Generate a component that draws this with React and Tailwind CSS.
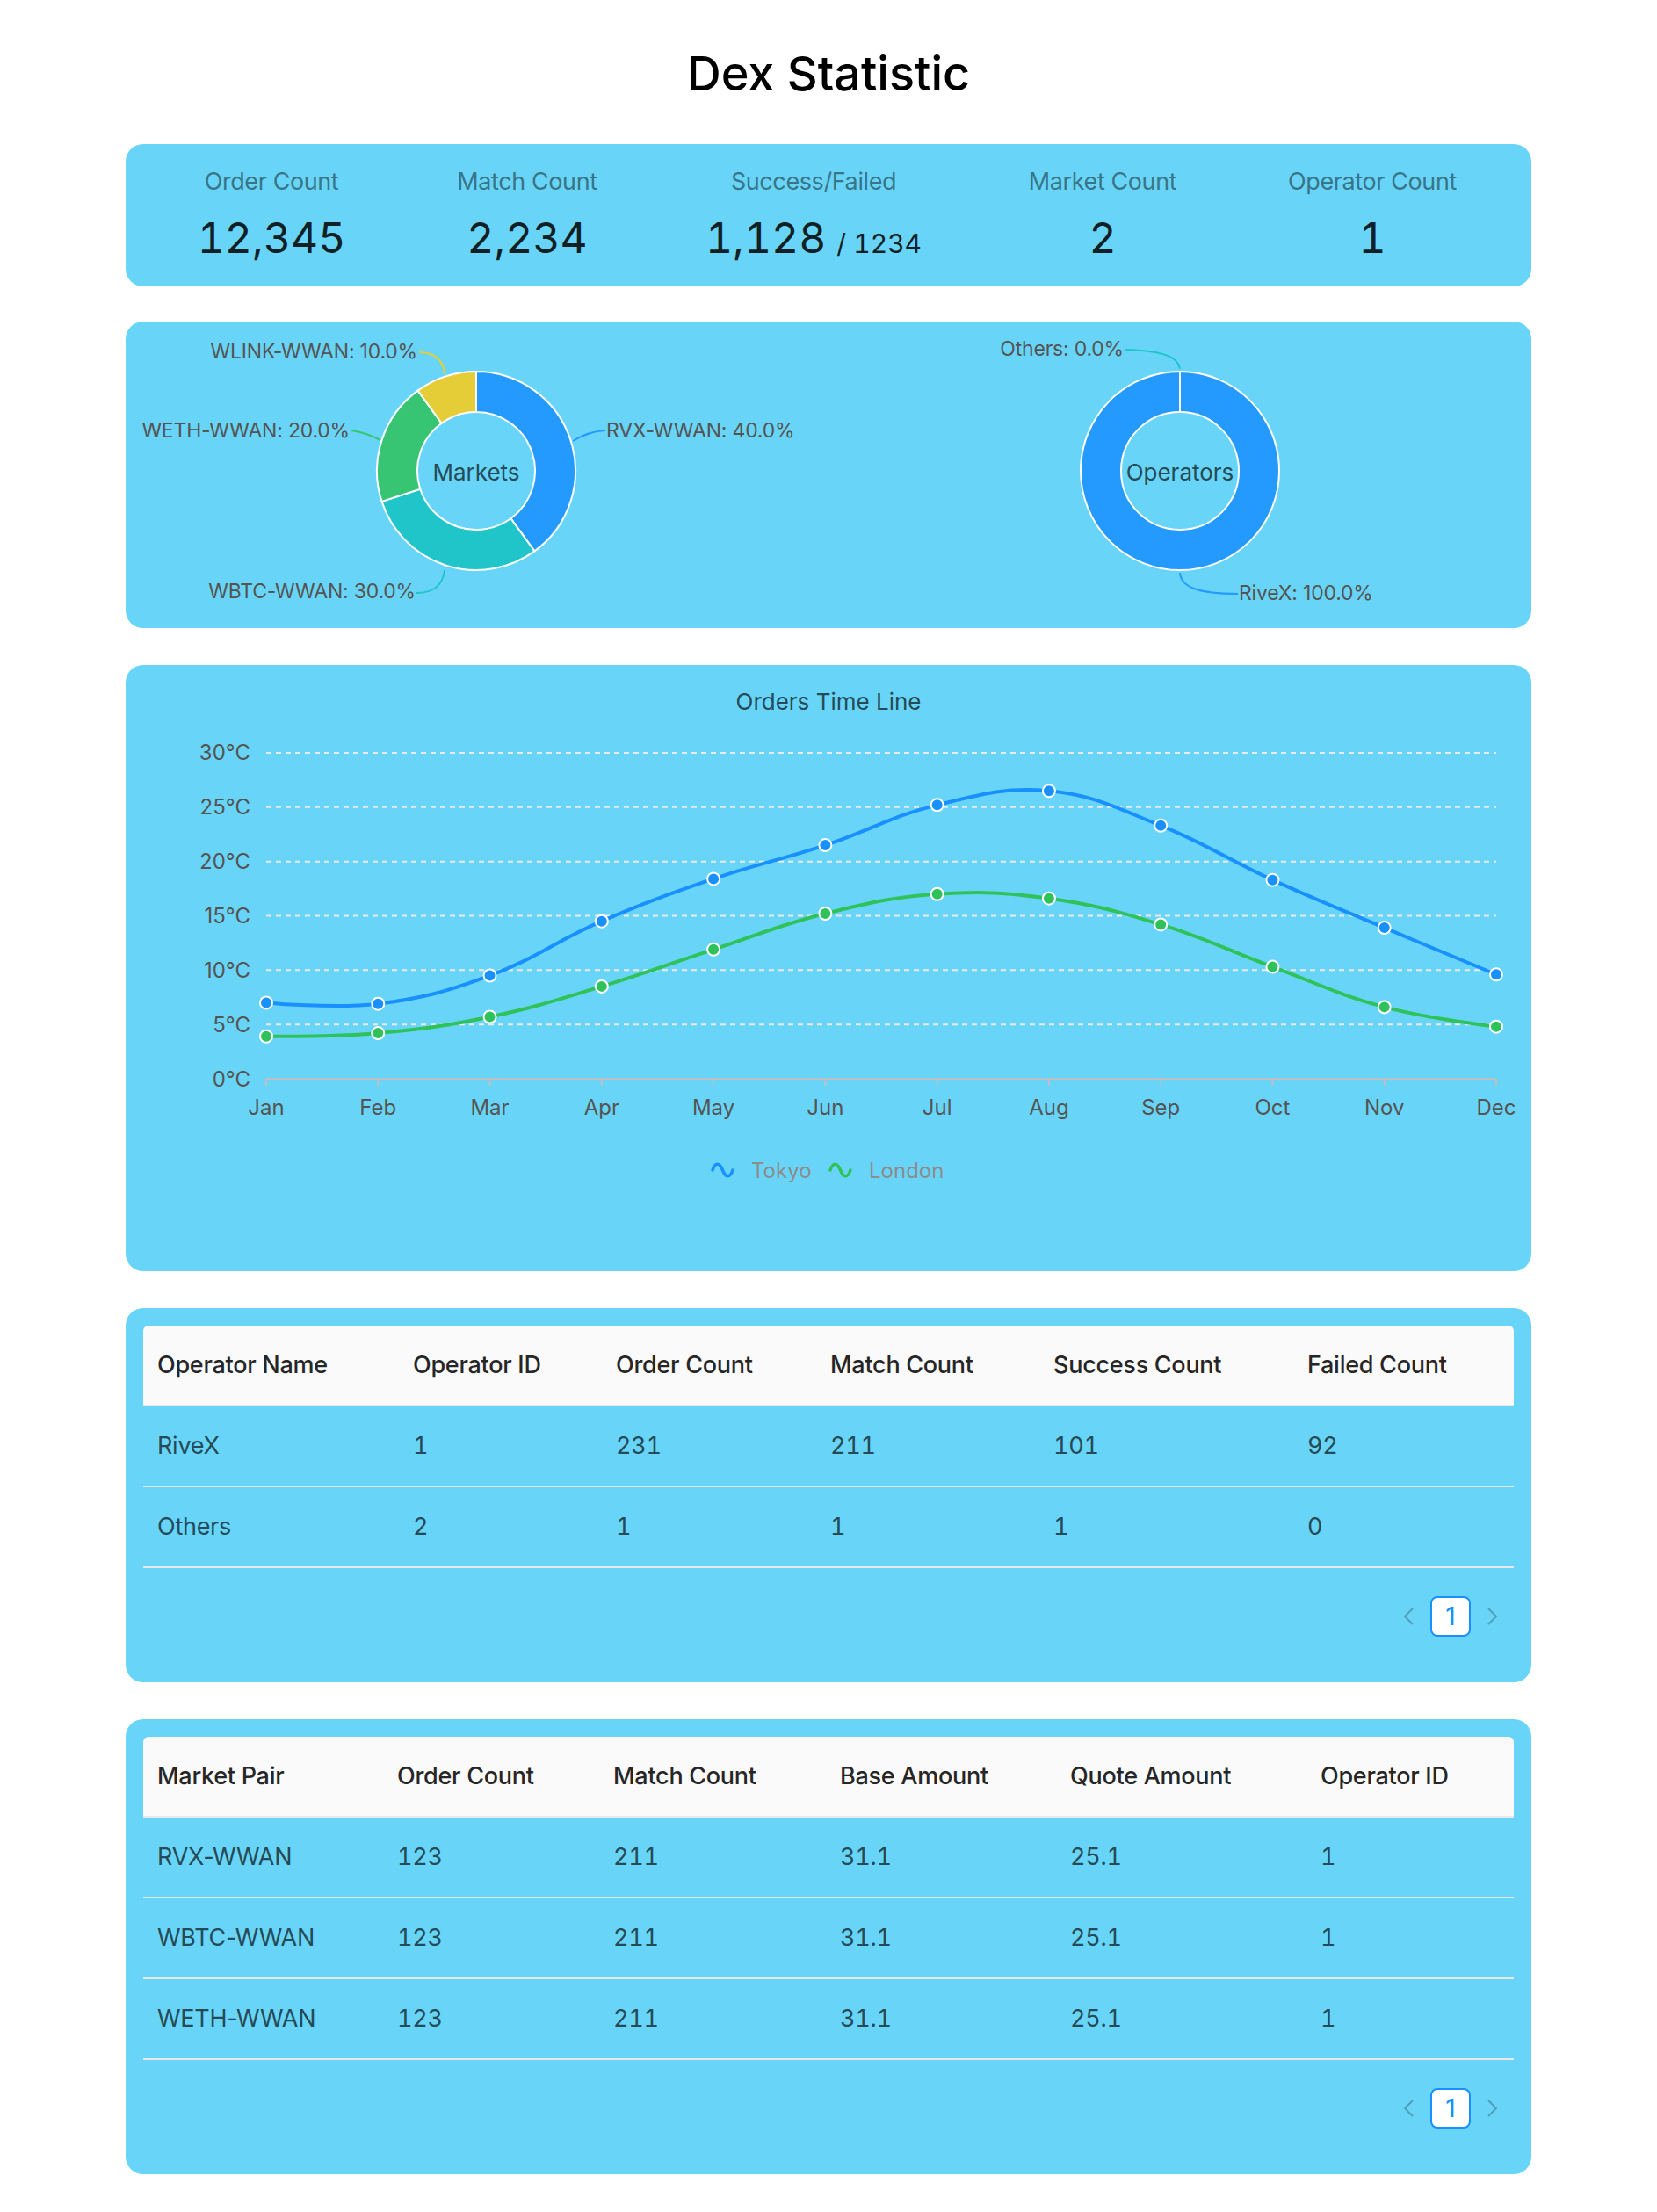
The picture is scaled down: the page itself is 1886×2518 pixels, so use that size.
import React from 'react';

const CARD = 'bg-[#68d5f8] rounded-[20px]';
const LABEL_FONT = 'Inter, sans-serif';

const stats = [
  { label: 'Order Count', value: '12,345', width: 'w-[252px]' },
  { label: 'Match Count', value: '2,234', width: 'w-[330px]' },
  { label: 'Success/Failed', value: '1,128', sub: '1234', width: 'w-[322px]' },
  { label: 'Market Count', value: '2', width: 'w-[336px]' },
  { label: 'Operator Count', value: '1', width: 'w-[278px]' },
];

const months = ['Jan', 'Feb', 'Mar', 'Apr', 'May', 'Jun', 'Jul', 'Aug', 'Sep', 'Oct', 'Nov', 'Dec'];
const tokyo = [7.0, 6.9, 9.5, 14.5, 18.4, 21.5, 25.2, 26.5, 23.3, 18.3, 13.9, 9.6];
const london = [3.9, 4.2, 5.7, 8.5, 11.9, 15.2, 17.0, 16.6, 14.2, 10.3, 6.6, 4.8];

const operatorCols = [
  { title: 'Operator Name', w: 'w-[291px]' },
  { title: 'Operator ID', w: 'w-[231px]' },
  { title: 'Order Count', w: 'w-[244px]' },
  { title: 'Match Count', w: 'w-[254px]' },
  { title: 'Success Count', w: 'w-[289px]' },
  { title: 'Failed Count', w: 'w-[251px]' },
];
const operatorRows = [
  ['RiveX', '1', '231', '211', '101', '92'],
  ['Others', '2', '1', '1', '1', '0'],
];

const marketCols = [
  { title: 'Market Pair', w: 'w-[273px]' },
  { title: 'Order Count', w: 'w-[246px]' },
  { title: 'Match Count', w: 'w-[258px]' },
  { title: 'Base Amount', w: 'w-[262px]' },
  { title: 'Quote Amount', w: 'w-[285px]' },
  { title: 'Operator ID', w: 'w-[236px]' },
];
const marketRows = [
  ['RVX-WWAN', '123', '211', '31.1', '25.1', '1'],
  ['WBTC-WWAN', '123', '211', '31.1', '25.1', '1'],
  ['WETH-WWAN', '123', '211', '31.1', '25.1', '1'],
];

// ring slice, angles clockwise from 12 o'clock
const ringSlice = (cx, cy, R, r, a0, a1) => {
  const p = (a, rad) => {
    const t = (a * Math.PI) / 180;
    return `${cx + rad * Math.sin(t)},${cy - rad * Math.cos(t)}`;
  };
  const large = a1 - a0 > 180 ? 1 : 0;
  return `M${p(a0, R)} A${R},${R} 0 ${large} 1 ${p(a1, R)} L${p(a1, r)} A${r},${r} 0 ${large} 0 ${p(a0, r)} Z`;
};

// catmull-rom style smoothing, same idea as the chart lib
const smoothPath = (pts, smooth = 0.4) => {
  const cps = [];
  pts.forEach((p, i) => {
    if (i === 0 || i === pts.length - 1) {
      cps.push(p);
      return;
    }
    const prev = pts[i - 1];
    const next = pts[i + 1];
    const vx = (next[0] - prev[0]) * smooth;
    const vy = (next[1] - prev[1]) * smooth;
    let d0 = Math.hypot(p[0] - prev[0], p[1] - prev[1]);
    let d1 = Math.hypot(next[0] - p[0], next[1] - p[1]);
    const sum = d0 + d1;
    if (sum) {
      d0 /= sum;
      d1 /= sum;
    }
    cps.push([p[0] - vx * d0, p[1] - vy * d0]);
    cps.push([p[0] + vx * d1, p[1] + vy * d1]);
  });
  let d = `M${pts[0][0]},${pts[0][1]}`;
  for (let i = 0; i < pts.length - 1; i++) {
    const a = cps[i * 2];
    const b = cps[i * 2 + 1];
    const p = pts[i + 1];
    d += ` C${a[0]},${a[1]} ${b[0]},${b[1]} ${p[0]},${p[1]}`;
  }
  return d;
};

const StatItem = ({ label, value, sub, width }) => (
  <div className={`${width} flex flex-col items-center`}>
    <div className="text-[27px] leading-[36px] tracking-[-0.015em] text-[#397588] whitespace-nowrap">{label}</div>
    <div className="mt-[18px] flex items-baseline text-[#102025] whitespace-nowrap tabular-nums">
      <span className="text-[48px] leading-[56px]">{value}</span>
      {sub && <span className="text-[30px] ml-[12px]">/ {sub}</span>}
    </div>
  </div>
);

const MarketsDonut = () => {
  const cx = 399;
  const cy = 170;
  const R = 113;
  const r = 67;
  const slices = [
    { a0: 0, a1: 144, color: '#249afe' },
    { a0: 144, a1: 252, color: '#20c5ca' },
    { a0: 252, a1: 324, color: '#38c573' },
    { a0: 324, a1: 360, color: '#e4cd36' },
  ];
  return (
    <svg viewBox="0 0 800 349" className="w-full h-full" fontFamily={LABEL_FONT}>
      {slices.map((s, i) => (
        <path key={i} d={ringSlice(cx, cy, R, r, s.a0, s.a1)} fill={s.color} stroke="#fff" strokeWidth="2" />
      ))}
      <path d="M334,35 C350,35 362,43 363,60" fill="none" stroke="#e4cd36" strokeWidth="2" />
      <path d="M257,124 Q272,126 290,135" fill="none" stroke="#38c573" strokeWidth="2" />
      <path d="M331,309 C350,309 361,300 363,283" fill="none" stroke="#20c5ca" strokeWidth="2" />
      <path d="M509,136 Q527,125 546,124" fill="none" stroke="#249afe" strokeWidth="2" />
      <g fontSize="23" letterSpacing="-0.2" fill="#545454" dominantBaseline="central">
        <text x="332" y="34" textAnchor="end">WLINK-WWAN: 10.0%</text>
        <text x="255" y="124" textAnchor="end">WETH-WWAN: 20.0%</text>
        <text x="330" y="307" textAnchor="end">WBTC-WWAN: 30.0%</text>
        <text x="547" y="124">RVX-WWAN: 40.0%</text>
      </g>
      <text x={cx} y={cy + 1} textAnchor="middle" dominantBaseline="central" fontSize="26" fill="#244b57">
        Markets
      </text>
    </svg>
  );
};

const OperatorsDonut = () => {
  const cx = 400;
  const cy = 170;
  const R = 113;
  const r = 67;
  return (
    <svg viewBox="0 0 800 349" className="w-full h-full" fontFamily={LABEL_FONT}>
      <circle cx={cx} cy={cy} r={R} fill="#249afe" stroke="#fff" strokeWidth="2" />
      <circle cx={cx} cy={cy} r={r} fill="#68d5f8" stroke="#fff" strokeWidth="2" />
      <line x1={cx} y1={cy - R} x2={cx} y2={cy - r} stroke="#fff" strokeWidth="2" />
      <path d="M338,32 C380,33 398,40 400,54" fill="none" stroke="#20c5ca" strokeWidth="2" />
      <path d="M400,286 C401,302 420,310 466,310" fill="none" stroke="#249afe" strokeWidth="2" />
      <g fontSize="23" letterSpacing="-0.2" fill="#545454" dominantBaseline="central">
        <text x="336" y="31" textAnchor="end">Others: 0.0%</text>
        <text x="467" y="309">RiveX: 100.0%</text>
      </g>
      <text x={cx} y={cy + 1} textAnchor="middle" dominantBaseline="central" fontSize="26" fill="#244b57">
        Operators
      </text>
    </svg>
  );
};

const LegendWave = ({ x, color }) => (
  <path
    d={`M${x + 2},${575} C${x + 5},${566} ${x + 10},${566} ${x + 13.5},${575} C${x + 17},${584} ${x + 22},${584} ${x + 25},${575}`}
    fill="none"
    stroke={color}
    strokeWidth="3.5"
    strokeLinecap="round"
  />
);

const OrdersTimeLine = () => {
  const xAt = (i) => 160 + i * (1400 / 11);
  const yAt = (v) => 471 - v * 12.367;
  const tokyoPts = tokyo.map((v, i) => [xAt(i), yAt(v)]);
  const londonPts = london.map((v, i) => [xAt(i), yAt(v)]);
  return (
    <svg viewBox="0 0 1600 690" className="w-full h-full" fontFamily={LABEL_FONT}>
      <text x="800" y="41" textAnchor="middle" dominantBaseline="central" fontSize="26" fill="#244b57">
        Orders Time Line
      </text>

      {/* grid */}
      {[5, 10, 15, 20, 25, 30].map((v) => (
        <line key={v} x1="160" x2="1560" y1={yAt(v)} y2={yAt(v)} stroke="#e9e9e9" strokeWidth="2" strokeDasharray="6 5" />
      ))}
      {[0, 5, 10, 15, 20, 25, 30].map((v) => (
        <text key={v} x="142" y={yAt(v)} textAnchor="end" dominantBaseline="central" fontSize="24" fill="#545454">
          {v}°C
        </text>
      ))}

      {/* x axis */}
      <line x1="160" x2="1560" y1="471" y2="471" stroke="#bfbfbf" strokeWidth="2" />
      {months.map((m, i) => (
        <g key={m}>
          <line x1={xAt(i)} x2={xAt(i)} y1="471" y2="479" stroke="#bfbfbf" strokeWidth="2" />
          <text x={xAt(i)} y="503" textAnchor="middle" dominantBaseline="central" fontSize="24" fill="#545454">
            {m}
          </text>
        </g>
      ))}

      {/* series */}
      <path d={smoothPath(tokyoPts)} fill="none" stroke="#1890ff" strokeWidth="4" />
      <path d={smoothPath(londonPts)} fill="none" stroke="#2fc25b" strokeWidth="4" />
      {tokyoPts.map((p, i) => (
        <circle key={`t${i}`} cx={p[0]} cy={p[1]} r="7" fill="#1890ff" stroke="#fff" strokeWidth="2" />
      ))}
      {londonPts.map((p, i) => (
        <circle key={`l${i}`} cx={p[0]} cy={p[1]} r="7" fill="#2fc25b" stroke="#fff" strokeWidth="2" />
      ))}

      {/* legend */}
      <LegendWave x={666} color="#1890ff" />
      <text x="712" y="575" dominantBaseline="central" fontSize="24" fill="#8c8c8c">Tokyo</text>
      <LegendWave x={800} color="#2fc25b" />
      <text x="846" y="575" dominantBaseline="central" fontSize="24" fill="#8c8c8c">London</text>
    </svg>
  );
};

const Chevron = ({ dir }) => (
  <svg width="14" height="22" viewBox="0 0 14 22" fill="none">
    <path
      d={dir === 'left' ? 'M12,2 L3,11 L12,20' : 'M2,2 L11,11 L2,20'}
      stroke="#4ea0ba"
      strokeWidth="2"
      strokeLinejoin="round"
    />
  </svg>
);

const Pagination = () => (
  <div className="my-8 flex justify-end items-center gap-[2px] pr-px">
    <div className="w-[46px] h-[46px] flex items-center justify-center">
      <Chevron dir="left" />
    </div>
    <div className="w-[46px] h-[46px] flex items-center justify-center bg-white border-2 border-[#1890ff] rounded-[8px] text-[28px] text-[#1890ff]">
      1
    </div>
    <div className="w-[46px] h-[46px] flex items-center justify-center">
      <Chevron dir="right" />
    </div>
  </div>
);

const DataTable = ({ cols, rows }) => (
  <table className="w-full table-fixed border-separate border-spacing-0 text-left text-[27px] tracking-[-0.01em]">
    <thead>
      <tr>
        {cols.map((c, i) => (
          <th
            key={c.title}
            className={`${c.w} px-4 py-0 leading-[90px] bg-[#fafafa] font-medium text-[#262626] border-b-2 border-[#e8e8e8] whitespace-nowrap ${
              i === 0 ? 'rounded-tl-[6px]' : ''
            } ${i === cols.length - 1 ? 'rounded-tr-[6px]' : ''}`}
          >
            {c.title}
          </th>
        ))}
      </tr>
    </thead>
    <tbody>
      {rows.map((row, ri) => (
        <tr key={ri}>
          {row.map((cell, ci) => (
            <td
              key={ci}
              className={`px-4 py-0 leading-[90px] text-[#244b57] border-b-2 border-[#e8e8e8] whitespace-nowrap ${
                ci > 0 ? 'tabular-nums' : ''
              }`}
            >
              {cell}
            </td>
          ))}
        </tr>
      ))}
    </tbody>
  </table>
);

export default function App() {
  return (
    <div className="min-h-screen bg-white font-['Inter',sans-serif] pt-[52px] pb-[40px]">
      <h1 className="text-center text-[54px] leading-[64px] font-medium text-black">Dex Statistic</h1>

      <div className="w-[1600px] mx-auto mt-[48px]">
        {/* Summary */}
        <div className={`${CARD} h-[162px] pt-[25px] pl-[40px] flex`}>
          {stats.map((s) => (
            <StatItem key={s.label} {...s} />
          ))}
        </div>

        {/* Pie charts */}
        <div className={`${CARD} mt-10 h-[349px] flex`}>
          <div className="w-1/2 h-full">
            <MarketsDonut />
          </div>
          <div className="w-1/2 h-full">
            <OperatorsDonut />
          </div>
        </div>

        {/* Time line */}
        <div className={`${CARD} mt-[42px] h-[690px]`}>
          <OrdersTimeLine />
        </div>

        {/* Operators table */}
        <div className={`${CARD} mt-[42px] px-5 pt-5`}>
          <DataTable cols={operatorCols} rows={operatorRows} />
          <Pagination />
          <div className="h-5" />
        </div>

        {/* Markets table */}
        <div className={`${CARD} mt-[42px] px-5 pt-5`}>
          <DataTable cols={marketCols} rows={marketRows} />
          <Pagination />
          <div className="h-5" />
        </div>
      </div>
    </div>
  );
}
